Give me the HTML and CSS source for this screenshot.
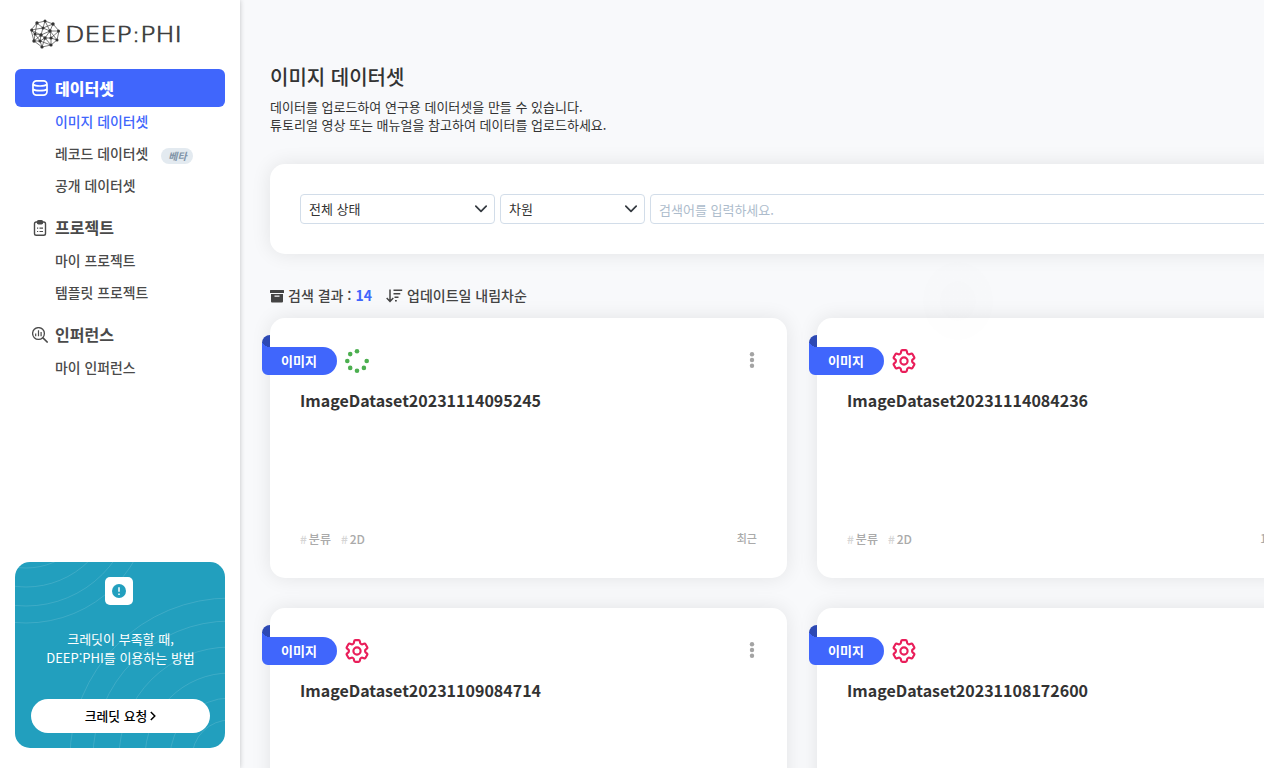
FILE: index.html
```html
<!DOCTYPE html>
<html lang="ko">
<head>
<meta charset="utf-8">
<title>DEEP:PHI</title>
<link rel="stylesheet" href="styles.css">
</head>
<body>
<svg class="defs" width="0" height="0">
  <symbol id="gear" viewBox="2 2 20 20">
    <path d="M9.594 3.94c.09-.542.56-.94 1.11-.94h2.593c.55 0 1.02.398 1.11.94l.213 1.281c.063.374.313.686.645.87.074.04.147.083.22.127.325.196.72.257 1.075.124l1.217-.456a1.125 1.125 0 0 1 1.37.49l1.296 2.247a1.125 1.125 0 0 1-.26 1.431l-1.003.827c-.293.241-.438.613-.43.992a7.723 7.723 0 0 1 0 .255c-.008.378.137.75.43.991l1.004.827c.424.35.534.955.26 1.43l-1.298 2.247a1.125 1.125 0 0 1-1.369.491l-1.217-.456c-.355-.133-.75-.072-1.076.124a6.47 6.47 0 0 1-.22.128c-.331.183-.581.495-.644.869l-.213 1.281c-.09.543-.56.94-1.11.94h-2.594c-.55 0-1.019-.398-1.11-.94l-.213-1.281c-.062-.374-.312-.686-.644-.87a6.52 6.52 0 0 1-.22-.127c-.325-.196-.72-.257-1.076-.124l-1.217.456a1.125 1.125 0 0 1-1.369-.49l-1.297-2.247a1.125 1.125 0 0 1 .26-1.431l1.004-.827c.292-.24.437-.613.43-.991a6.932 6.932 0 0 1 0-.255c.007-.38-.138-.751-.43-.992l-1.004-.827a1.125 1.125 0 0 1-.26-1.43l1.297-2.247a1.125 1.125 0 0 1 1.37-.491l1.216.456c.356.133.751.072 1.076-.124.072-.044.146-.086.22-.128.332-.183.582-.495.644-.869l.214-1.28Z" fill="none" stroke="#e91e5a" stroke-width="1.8"/>
    <circle cx="12" cy="12" r="3" fill="none" stroke="#e91e5a" stroke-width="1.8"/>
  </symbol>
  <symbol id="dots" viewBox="0 0 6 16">
    <g fill="#a3a3a3"><circle cx="3" cy="2.2" r="2.2"/><circle cx="3" cy="8" r="2.2"/><circle cx="3" cy="13.8" r="2.2"/></g>
  </symbol>
  <symbol id="chev" viewBox="0 0 12 8"><path d="M.8 1.2 6 6.4l5.200-5.200" fill="none" stroke="#343a40" stroke-width="1.7" stroke-linecap="round" stroke-linejoin="round"/></symbol>
</svg>
<div class="app">
  <aside class="sidebar">
    <svg class="logo" width="152" height="30" viewBox="0 0 152 30">
      <g stroke="#444" stroke-width=".7" fill="none">
        <path d="M7 4 15 2 23 5 29 12 27 21 21 26 12 28 4 22 1 11ZM7 4 13 9 23 5M15 2 13 9 1 11 5 15 11 16 20 12 29 12M15 2 20 12 23 5M7 4 5 15 4 22 11 16 13 9 20 12 15 19 11 16 10 22 4 22M15 19 10 22 12 28 15 19 21 19 27 21M20 12 21 19 29 12M21 19 21 26 15 19M10 22 21 26M1 11 11 16M20 12 27 21M5 15 10 22"/>
      </g>
      <g fill="#333"><circle cx="7" cy="4" r="1.700"/><circle cx="15" cy="2" r="1.500"/><circle cx="23" cy="5" r="1.700"/><circle cx="28.500" cy="12" r="1.500"/><circle cx="27" cy="21" r="1.500"/><circle cx="21" cy="26" r="1.600"/><circle cx="12" cy="28" r="1.600"/><circle cx="4" cy="22" r="1.700"/><circle cx="1.700" cy="11" r="1.500"/><circle cx="13" cy="9" r="1.500"/><circle cx="20" cy="12" r="1.700"/><circle cx="5" cy="15" r="1.500"/><circle cx="11" cy="16" r="1.700"/><circle cx="15" cy="19" r="1.700"/><circle cx="21" cy="19" r="1.600"/><circle cx="10" cy="22" r="1.600"/></g>
      <text class="wordmark" x="35" y="22.800" textLength="117" lengthAdjust="spacingAndGlyphs">DEEP:PHI</text>
    </svg>
    <nav class="nav">
      <div class="nav-head active">
        <svg width="16" height="16" viewBox="0 0 16 16" fill="none" stroke="#fff" stroke-width="1.700"><rect x="1" y=".9" width="14" height="14.200" rx="3.500"/><path d="M1 4.500Q3 6 8 6t7-1.500M1 9.200q2 1.500 7 1.500t7-1.500"/></svg>
        <span>데이터셋</span>
      </div>
      <div class="nav-sub first current">이미지 데이터셋</div>
      <div class="nav-sub">레코드 데이터셋<em class="beta">베타</em></div>
      <div class="nav-sub">공개 데이터셋</div>
      <div class="nav-head next">
        <svg width="16" height="16" viewBox="0 0 16 16" fill="none" stroke="#4a4a4a" stroke-width="1.400"><rect x="2.500" y="2" width="11" height="13.300" rx="1.800"/><rect x="5.500" y=".8" width="5" height="3" rx="1" fill="#4a4a4a"/><path d="M5 8.200h1.200M7.500 8.200h3.500M5 11.500h1.200M7.500 11.500h3.500" stroke-width="1.200"/></svg>
        <span>프로젝트</span>
      </div>
      <div class="nav-sub lead">마이 프로젝트</div>
      <div class="nav-sub">템플릿 프로젝트</div>
      <div class="nav-head next">
        <svg width="16" height="16" viewBox="0 0 16 16" fill="none" stroke="#4a4a4a" stroke-width="1.300"><circle cx="6.500" cy="6.500" r="5.900"/><path d="m10.700 10.700 5 4.800" stroke-width="1.600"/><path d="M3.700 6.500v2.800M6.500 3.300v6M9.100 5v4.300" stroke-width="1.200"/></svg>
        <span>인퍼런스</span>
      </div>
      <div class="nav-sub lead">마이 인퍼런스</div>
    </nav>
    <section class="credit">
      <svg class="waves" width="210" height="186" viewBox="0 0 210 186" fill="none" stroke="#fff" stroke-opacity=".13">
        <circle cx="11" cy="-64" r="70"/><circle cx="11" cy="-64" r="89"/><circle cx="11" cy="-64" r="108"/><circle cx="11" cy="-64" r="125"/>
        <circle cx="215" cy="196" r="38"/><circle cx="215" cy="196" r="60"/><circle cx="215" cy="196" r="85"/><circle cx="215" cy="196" r="111"/><circle cx="215" cy="196" r="137"/><circle cx="215" cy="196" r="160"/>
      </svg>
      <span class="notice"><svg width="14" height="14" viewBox="0 0 14 14"><circle cx="7" cy="7" r="7" fill="#229fbe"/><path d="M7 3.300v4.500M7 9.400v1.500" stroke="#fff" stroke-width="1.500"/></svg></span>
      <p class="credit-text">크레딧이 부족할 때,<br>DEEP:PHI를 이용하는 방법</p>
      <div class="credit-btn">크레딧 요청<svg width="6" height="10" viewBox="0 0 6 10"><path d="m.8 1 4 4-4 4" fill="none" stroke="#000" stroke-width="1.500"/></svg></div>
    </section>
  </aside>
  <main class="main">
    <h1 class="title">이미지 데이터셋</h1>
    <p class="desc">데이터를 업로드하여 연구용 데이터셋을 만들 수 있습니다.<br>튜토리얼 영상 또는 매뉴얼을 참고하여 데이터를 업로드하세요.</p>
    <div class="search">
      <div class="field status"><span>전체 상태</span><svg width="12" height="8"><use href="#chev"/></svg></div>
      <div class="field dim"><span>차원</span><svg width="12" height="8"><use href="#chev"/></svg></div>
      <div class="field query">검색어를 입력하세요.</div>
    </div>
    <div class="summary">
      <svg width="14" height="13" viewBox="0 0 14 13"><path fill="#444" fill-rule="evenodd" d="M.5 0h13q.5 0 .5.500V3H0V.500Q0 0 .5 0ZM1 4h12v7.500q0 1-1 1H2q-1 0-1-1ZM4.500 5.500v1.300h5V5.500Z"/></svg>
      <span class="count">검색 결과 : <b>14</b></span>
      <svg class="sort-icon" width="17" height="14" viewBox="0 0 17 14" fill="none" stroke="#444" stroke-width="1.500"><path d="M4 .5v11.700M.7 9 4 12.400 7.300 9M7.500 1.200h8.700M7.500 4.700h6.800M8.500 8.200h4M9 11.700h1.800"/></svg>
      <span>업데이트일 내림차순</span>
    </div>
    <div class="grid">
      <article class="card">
        <i class="fold"></i><span class="ribbon">이미지</span>
        <div class="card-top">
          <svg width="24" height="24" viewBox="0 0 24 24" fill="#4caf50"><circle cx="12" cy="2.300" r="2.300"/><circle cx="5.200" cy="5.100" r="2.300"/><circle cx="2.300" cy="12" r="2.300"/><circle cx="5.200" cy="18.900" r="2.300"/><circle cx="12" cy="21.700" r="2.300"/><circle cx="18.900" cy="18.900" r="2.300"/><circle cx="21.700" cy="12" r="2.300"/></svg>
          <svg class="more" width="6" height="16"><use href="#dots"/></svg>
        </div>
        <h2 class="name">ImageDataset20231114095245</h2>
        <div class="card-foot"><span class="tag"><i>#</i>분류</span><span class="tag"><i>#</i>2D</span><span class="time">최근</span></div>
      </article>
      <article class="card">
        <i class="fold"></i><span class="ribbon">이미지</span>
        <div class="card-top"><svg width="24" height="24"><use href="#gear"/></svg><svg class="more" width="6" height="16"><use href="#dots"/></svg></div>
        <h2 class="name">ImageDataset20231114084236</h2>
        <div class="card-foot"><span class="tag"><i>#</i>분류</span><span class="tag"><i>#</i>2D</span><span class="time ago">1시간 전</span></div>
      </article>
      <article class="card">
        <i class="fold"></i><span class="ribbon">이미지</span>
        <div class="card-top"><svg width="24" height="24"><use href="#gear"/></svg><svg class="more" width="6" height="16"><use href="#dots"/></svg></div>
        <h2 class="name">ImageDataset20231109084714</h2>
      </article>
      <article class="card">
        <i class="fold"></i><span class="ribbon">이미지</span>
        <div class="card-top"><svg width="24" height="24"><use href="#gear"/></svg><svg class="more" width="6" height="16"><use href="#dots"/></svg></div>
        <h2 class="name">ImageDataset20231108172600</h2>
      </article>
    </div>
    <div class="halo"></div>
  </main>
</div>
</body>
</html>
```
FILE: styles.css
```css
* { box-sizing: border-box; }
body {
  margin: 0;
  font-family: "Noto Sans CJK KR", "Noto Sans", sans-serif;
  font-size: 13px;
  color: #333;
  background: #f8f9fb;
}
h1, h2, p { margin: 0; }
svg { display: block; flex: none; }
.defs { position: absolute; }
.app { display: flex; width: 1264px; height: 768px; overflow: hidden; }

.sidebar {
  display: flex;
  flex-direction: column;
  flex: none;
  width: 240px;
  padding: 19px 15px 20px;
  background: #fff;
  box-shadow: 0 0 5px rgba(0, 0, 0, .22);
}
.logo { margin-left: 15px; }
.wordmark {
  font-family: "DejaVu Sans", sans-serif;
  font-weight: 200;
  font-size: 21px;
  fill: #3c3c3c;
  stroke: #3c3c3c;
  stroke-width: .7px;
}
.nav { padding-top: 20px; }
.nav-head {
  display: flex;
  align-items: center;
  gap: 7px;
  height: 38px;
  padding-left: 17px;
  border-radius: 6px;
  font-size: 16px;
  font-weight: 700;
  color: #4a4a4a;
}
.nav-head span { padding-bottom: 2px; }
.nav-head.active { background: #4066fc; color: #fff; }
.nav-head.active span { padding-bottom: 1px; font-weight: 900; }
.nav-head.next { margin-top: 7px; }
.nav-sub {
  display: flex;
  align-items: center;
  height: 32px;
  padding: 0 0 2px 40px;
  font-size: 13.9px;
  font-weight: 500;
  color: #4a4a4a;
}
.nav-sub.first { margin-top: -1px; }
.nav-sub.lead { margin-top: -2px; }
.nav-sub.current { color: #4066fc; }
.beta {
  height: 16px;
  margin: 5px 0 0 13px;
  padding: 0 6px 0 7px;
  border-radius: 8px;
  background: #e3eaf0;
  color: #8093a7;
  font-size: 10px;
  font-weight: 700;
  line-height: 16px;
}

.credit {
  position: relative;
  display: flex;
  flex-direction: column;
  align-items: center;
  height: 186px;
  margin-top: auto;
  padding: 15px 15px 15px 16px;
  border-radius: 15px;
  background: #229fbe;
  overflow: hidden;
}
.waves { position: absolute; left: 0; top: 0; }
.notice {
  display: flex;
  align-items: center;
  justify-content: center;
  width: 28px;
  height: 28px;
  margin-right: 3px;
  border-radius: 5px;
  background: #fff;
}
.credit-text { padding-top: 24px; color: #fff; font-size: 13px; line-height: 19px; text-align: center; font-weight: 400; }
.credit-btn {
  display: flex;
  align-items: center;
  justify-content: center;
  gap: 3px;
  width: 179px;
  height: 34px;
  margin-top: auto;
  padding-bottom: 1px;
  border-radius: 17px;
  background: #fff;
  color: #000;
  font-size: 12.800px;
  font-weight: 500;
}

.main { position: relative; flex: none; width: 1094px; padding: 62px 0 0 30px; }
.title { font-size: 20px; font-weight: 500; line-height: 30px; }
.desc { padding-top: 6px; font-size: 13px; line-height: 18px; }
.search {
  display: flex;
  gap: 5px;
  width: 1064px;
  height: 90px;
  margin-top: 30px;
  padding: 30px;
  border-radius: 15px;
  background: #fff;
  box-shadow: 0 0 20px rgba(0, 0, 0, .09);
}
.field {
  display: flex;
  align-items: center;
  justify-content: space-between;
  height: 30px;
  padding: 0 7px 0 8px;
  border: 1px solid #d2dde9;
  border-radius: 4px;
}
.field span { padding-bottom: 2px; }
.status { width: 195px; }
.dim { width: 145px; }
.query { flex: 1; color: #adbccc; padding-top: 1px; }
.summary {
  display: flex;
  align-items: center;
  height: 20px;
  margin-top: 32px;
  gap: 4px;
  font-size: 14px;
  font-weight: 500;
  color: #444;
}
.summary span { padding-bottom: 2px; }
.summary b { font-weight: 700; color: #4066fc; }
.sort-icon { margin-left: 10px; }

.grid { display: grid; grid-template-columns: 517px 517px; gap: 30px; margin-top: 12px; }
.card {
  position: relative;
  display: flex;
  flex-direction: column;
  height: 260px;
  padding: 30px;
  border-radius: 15px;
  background: #fff;
  box-shadow: 0 0 20px rgba(0, 0, 0, .09);
}
.ribbon {
  position: absolute;
  left: -8px;
  top: 29px;
  width: 75px;
  height: 28px;
  border-radius: 0 14px 14px 6px;
  background: #4066fc;
  color: #fff;
  font-size: 13px;
  font-weight: 700;
  line-height: 28px;
  padding-right: 1px;
  text-align: center;
}
.fold {
  position: absolute;
  left: -8px;
  top: 17px;
  width: 8px;
  height: 13px;
  border-radius: 8px 0 0 0;
  background: radial-gradient(ellipse 8px 6px at 100% 6px, #2c48b3 97%, #4066fc 100%);
}
.card-top { display: flex; align-items: center; justify-content: space-between; height: 26px; padding: 0 2px 0 45px; }
.more { margin-bottom: 2px; }
.name { padding-top: 14px; font-size: 16px; font-weight: 700; line-height: 24px; }
.card-foot { display: flex; gap: 10px; margin-top: auto; font-size: 12px; line-height: 18px; color: #aaa; font-weight: 500; }
.tag i { margin-right: 2px; font-style: normal; color: #d5d5d5; }
.time { margin-left: auto; font-size: 11px; line-height: 17px; }
.time.ago { margin-right: 4px; }
.halo {
  position: absolute;
  left: 683px;
  top: 262px;
  width: 70px;
  height: 78px;
  border-radius: 50%;
  background: radial-gradient(closest-side, rgba(0, 0, 0, .008) 50%, rgba(0, 0, 0, .004) 52%);
}
```
